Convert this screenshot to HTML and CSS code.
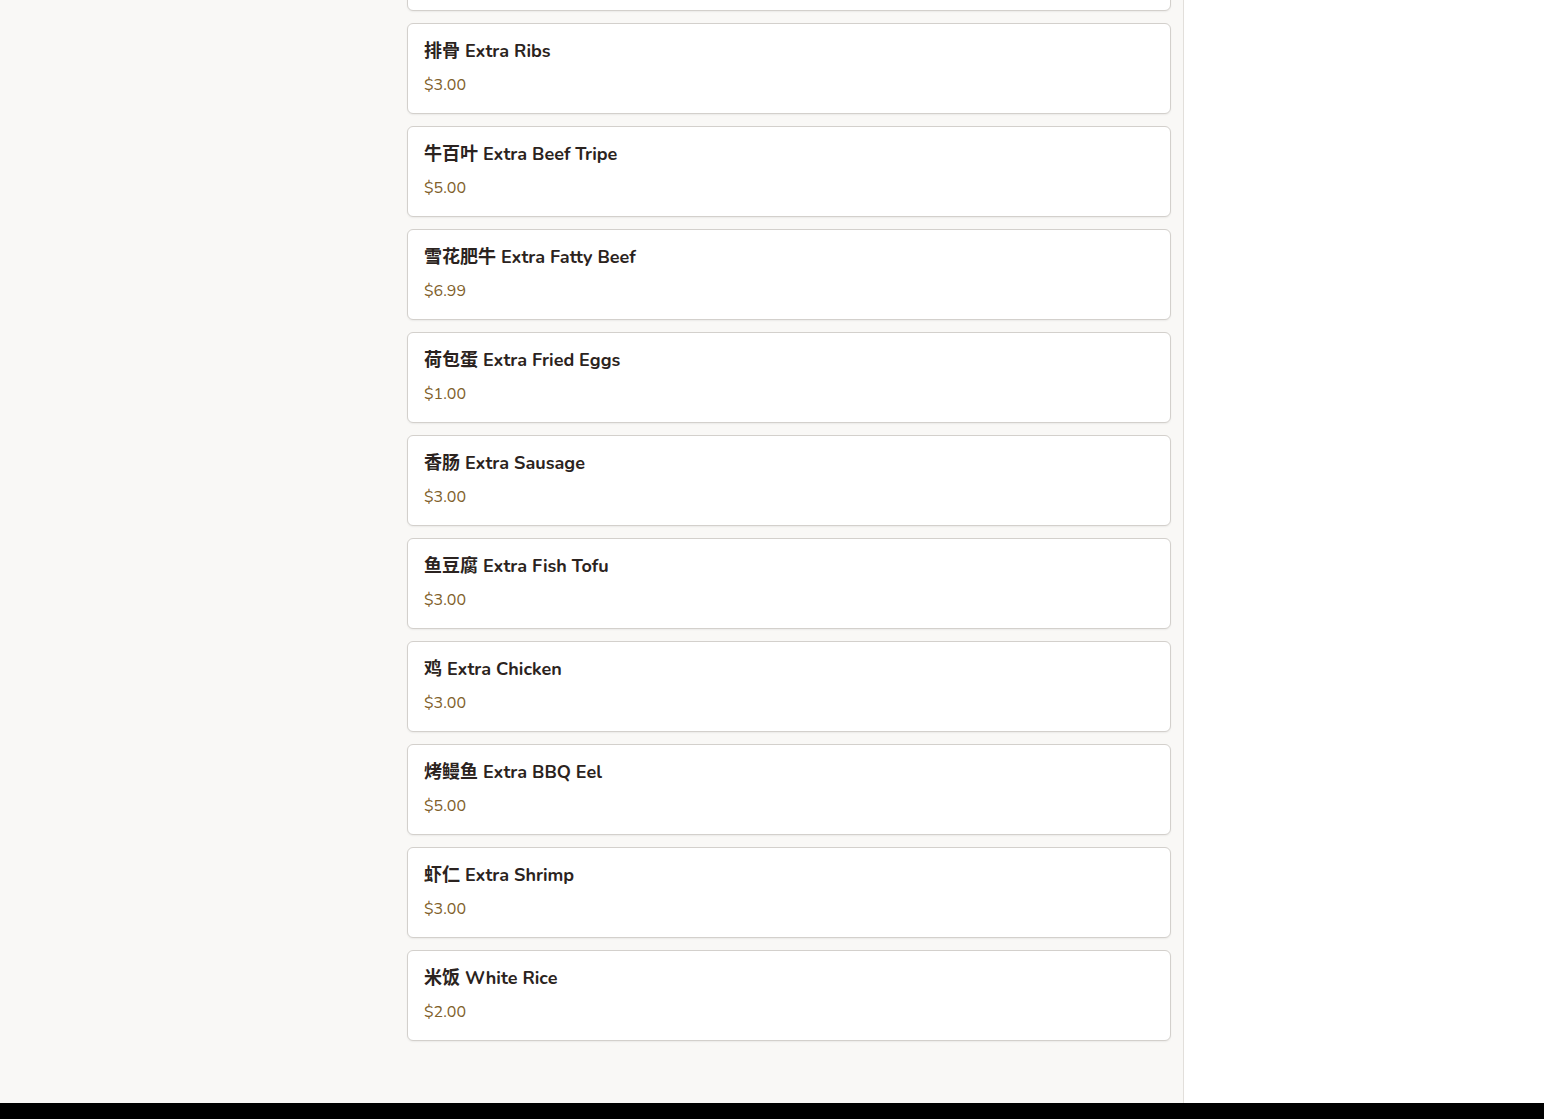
FILE: index.html
```html
<!DOCTYPE html>
<html lang="zh">
<head>
<meta charset="utf-8">
<title>Menu</title>
<link rel="stylesheet" href="styles.css">
</head>
<body>
<div class="page">
  <main class="main">
    <div class="list">
      <div class="card card-partial"></div>
      <div class="card"><div class="title">排骨 Extra Ribs</div><div class="price">$3.00</div></div>
      <div class="card"><div class="title">牛百叶 Extra Beef Tripe</div><div class="price">$5.00</div></div>
      <div class="card"><div class="title">雪花肥牛 Extra Fatty Beef</div><div class="price">$6.99</div></div>
      <div class="card"><div class="title">荷包蛋 Extra Fried Eggs</div><div class="price">$1.00</div></div>
      <div class="card"><div class="title">香肠 Extra Sausage</div><div class="price">$3.00</div></div>
      <div class="card"><div class="title">鱼豆腐 Extra Fish Tofu</div><div class="price">$3.00</div></div>
      <div class="card"><div class="title">鸡 Extra Chicken</div><div class="price">$3.00</div></div>
      <div class="card"><div class="title">烤鳗鱼 Extra BBQ Eel</div><div class="price">$5.00</div></div>
      <div class="card"><div class="title">虾仁 Extra Shrimp</div><div class="price">$3.00</div></div>
      <div class="card"><div class="title">米饭 White Rice</div><div class="price">$2.00</div></div>
    </div>
  </main>
  <aside class="side"></aside>
</div>
<footer class="footer"></footer>
</body>
</html>
```
FILE: styles.css
```css
* { box-sizing: border-box; }
html, body { margin: 0; padding: 0; }
body {
  font-family: "Nunito", "Lato", "Noto Sans", "Noto Sans CJK SC", sans-serif;
  background: #ffffff;
  color: #2b2320;
  height: 1119px;
  overflow: hidden;
  display: flex;
  flex-direction: column;
}
.page {
  display: flex;
  height: 1103px;
  overflow: hidden;
}
.main {
  width: 1184px;
  background: #f9f8f6;
  border-right: 1px solid #e2dfdb;
  padding: 0 12px 0 407px;
}
.list {
  display: flex;
  flex-direction: column;
  gap: 12px;
  margin-top: -80px;
}
.card {
  background: #ffffff;
  border: 1px solid #d3d0cc;
  border-radius: 6px;
  box-shadow: 0 1px 2px rgba(0,0,0,0.06);
  height: 91px;
  padding: 14px 16px 0 16px;
  display: flex;
  flex-direction: column;
  gap: 9px;
}
.title {
  font-size: 18px;
  font-weight: 700;
  line-height: 26px;
  color: #2b2320;
}
.price {
  font-size: 16px;
  line-height: 24px;
  color: #80602a;
}
.side {
  flex: 1;
  background: #ffffff;
}
.footer {
  height: 16px;
  background: #000000;
}
```
